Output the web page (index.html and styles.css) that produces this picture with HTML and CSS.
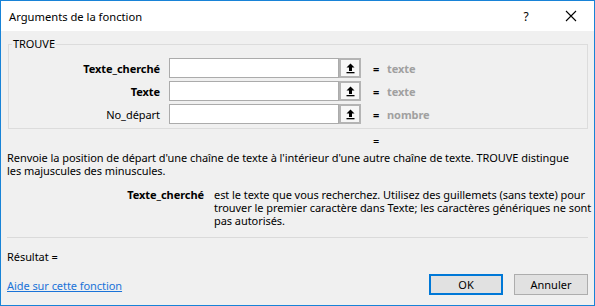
FILE: index.html
```html
<!DOCTYPE html>
<html lang="fr">
<head>
<meta charset="utf-8">
<title>Arguments de la fonction</title>
<link rel="stylesheet" href="styles.css">
</head>
<body>
<div class="window">
  <div class="titlebar">
    <span class="title">Arguments de la fonction</span>
    <span class="help">?</span>
    <span class="close"><svg width="12" height="12" viewBox="0 0 12 12"><path d="M1 1L11 11M11 1L1 11" stroke="#000" stroke-width="1.1" fill="none"/></svg></span>
  </div>
  <div class="body">
    <fieldset class="group">
      <legend>TROUVE</legend>
      <div class="row">
        <label class="lbl bold">Texte_cherché</label>
        <div class="input"></div>
        <div class="pick"><svg width="9" height="11" viewBox="0 0 9 11"><path d="M4.5 0.5L8.5 4.5H6V8H3V4.5H0.5Z" fill="#000"/><rect x="0.5" y="9" width="8" height="1.3" fill="#000"/></svg></div>
        <span class="eq">=</span>
        <span class="val">texte</span>
      </div>
      <div class="row">
        <label class="lbl bold">Texte</label>
        <div class="input"></div>
        <div class="pick"><svg width="9" height="11" viewBox="0 0 9 11"><path d="M4.5 0.5L8.5 4.5H6V8H3V4.5H0.5Z" fill="#000"/><rect x="0.5" y="9" width="8" height="1.3" fill="#000"/></svg></div>
        <span class="eq">=</span>
        <span class="val">texte</span>
      </div>
      <div class="row">
        <label class="lbl">No_départ</label>
        <div class="input"></div>
        <div class="pick"><svg width="9" height="11" viewBox="0 0 9 11"><path d="M4.5 0.5L8.5 4.5H6V8H3V4.5H0.5Z" fill="#000"/><rect x="0.5" y="9" width="8" height="1.3" fill="#000"/></svg></div>
        <span class="eq">=</span>
        <span class="val">nombre</span>
      </div>
    </fieldset>
    <div class="result-eq">=</div>
    <p class="desc">Renvoie la position de départ d'une chaîne de texte à l'intérieur d'une autre chaîne de texte. TROUVE distingue les majuscules des minuscules.</p>
    <div class="arg">
      <span class="arg-name">Texte_cherché</span>
      <span class="arg-text">est le texte que vous recherchez. Utilisez des guillemets (sans texte) pour trouver le premier caractère dans Texte; les caractères génériques ne sont pas autorisés.</span>
    </div>
    <div class="sep"></div>
    <div class="result">Résultat =</div>
    <div class="footer">
      <a class="help-link" href="#">Aide sur cette fonction</a>
      <div class="buttons">
        <button class="btn default">OK</button>
        <button class="btn">Annuler</button>
      </div>
    </div>
  </div>
</div>
</body>
</html>
```
FILE: styles.css
```css
* { box-sizing: border-box; }
html, body { margin: 0; padding: 0; }
body {
  font-family: "Noto Sans", "Open Sans", sans-serif;
  font-size: 11px;
  letter-spacing: -0.06px;
  color: #000;
  background: #fff;
}
.window {
  width: 595px;
  height: 306px;
  border: 1px solid #1883d7;
  background: #f0f0f0;
  display: flex;
  flex-direction: column;
  overflow: hidden;
}
.titlebar {
  height: 30px;
  background: #fff;
  display: flex;
  align-items: center;
  padding-left: 8px;
  flex: none;
}
.title { flex: 1; font-size: 11.2px; letter-spacing: 0; }
.help { width: 46px; text-align: center; font-size: 12px; margin-right: -1px; }
.close { width: 46px; display: flex; justify-content: center; }
.body {
  flex: 1;
  padding: 0 6px;
  display: flex;
  flex-direction: column;
}
.group {
  margin: 5px 0 0 1px;
  padding: 0 0 4px 0;
  width: 580px;
  border: 1px solid #dcdcdc;
  min-width: 0;
  flex: none;
}
.group legend {
  margin-left: 3px;
  padding: 0 1px;
  line-height: 16px;
}
.row {
  display: grid;
  grid-template-columns: 160px 170px 22px 26px auto;
  align-items: center;
  height: 20px;
  margin-top: 3px;
}
.row:first-of-type { margin-top: 6px; }
.lbl { text-align: right; padding-right: 9px; }
.bold { font-weight: bold; }
.input {
  height: 20px;
  background: #fff;
  border: 1px solid #ababab;
}
.pick {
  height: 20px;
  width: 22px;
  border: 2px solid #b4b4b4;
  background: #f7f7f7;
  display: flex;
  align-items: center;
  justify-content: center;
}
.eq { padding-left: 12px; font-weight: bold; }
.val { color: #a0a0a0; font-weight: bold; }
.result-eq {
  margin-top: 5px;
  padding-left: 366px;
  line-height: 13px;
  height: 13px;
  flex: none;
}
.desc {
  margin: 4px 0 0 0;
  line-height: 13px;
  width: 576px;
  flex: none;
}
.arg {
  display: flex;
  margin-top: 11px;
  line-height: 13px;
  flex: none;
}
.arg-name { font-weight: bold; width: 207px; text-align: right; padding-right: 10px; flex: none; }
.arg-text { width: 384px; flex: none; }
.sep {
  margin-top: 10px;
  height: 1px;
  background: #dadada;
  width: 581px;
  flex: none;
}
.result { margin-top: 12px; line-height: 13px; flex: none; }
.footer {
  display: flex;
  align-items: center;
  margin-top: 11px;
  flex: none;
}
.help-link { color: #1a73d8; flex: 1; position: relative; top: 1px; }
.buttons { display: flex; gap: 11px; }
.btn {
  font-family: inherit;
  font-size: 11px;
  width: 74px;
  height: 21px;
  border: 1px solid #adadad;
  background: #e1e1e1;
  padding: 0;
  color: #000;
}
.btn.default { border: 2px solid #0078d7; }
```
